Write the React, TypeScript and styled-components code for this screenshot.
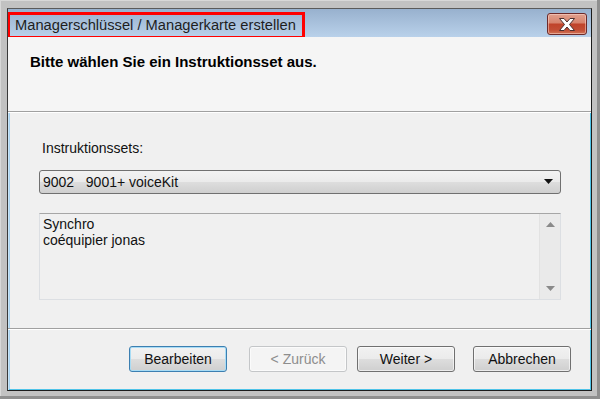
import React from 'react'
import styled, { createGlobalStyle } from 'styled-components'

const GlobalStyle = createGlobalStyle`
  html, body {
    margin: 0;
    padding: 0;
    background: #c0c0c0;
  }
`

const Frame = styled.div`
  width: 600px;
  height: 399px;
  box-sizing: border-box;
  padding: 8px 8px 8px 7px;
  background: #c2c2c2;
  box-shadow: inset -3px -3px 0 #8f8f8f, inset 1px 1px 0 #d8d8d8;
  font-family: "Liberation Sans", Arial, sans-serif;
`

const Window = styled.div`
  height: 100%;
  box-sizing: border-box;
  border: 1px solid #1c1c1c;
  border-top-color: #5a5a5a;
  border-left-color: #3a3a3a;
  box-shadow: inset 1px 0 0 #c8e4f6, inset -1px -1px 0 #4fc3e8, inset 2px 0 0 #a9d2ef;
  display: flex;
  flex-direction: column;
  background: #f0f0f0;
  overflow: hidden;
`

const TitleBar = styled.div`
  height: 28px;
  flex: none;
  display: flex;
  align-items: center;
  justify-content: space-between;
  padding: 0 4px 0 0;
  background: linear-gradient(#98b1ce, #b9d1ea);
`

const TitleText = styled.span`
  margin-left: -1px;
  margin-top: 4px;
  height: 27px;
  box-sizing: border-box;
  padding: 0 6px 0 5px;
  border: 3px solid #ff0000;
  font-size: 14.7px;
  line-height: 20px;
  color: #1e1e1e;
  white-space: nowrap;
`

const CloseButton = styled.div`
  width: 40px;
  height: 22px;
  box-sizing: border-box;
  margin-top: 2px;
  border: 1px solid #6c2a2a;
  border-radius: 3px;
  background: linear-gradient(#e0a08e 0%, #d7836d 45%, #c0432a 50%, #c24e35 80%, #d17558 100%);
  box-shadow: inset 0 0 0 1px rgba(255, 220, 210, 0.5);
  display: flex;
  align-items: center;
  justify-content: center;
`

const Header = styled.div`
  height: 74px;
  flex: none;
  background: #f5f5f5;
  border-bottom: 1px solid #a0a0a0;
  box-shadow: 0 1px 0 #ffffff;
  padding-left: 22px;
  display: flex;
  align-items: flex-start;
`

const Heading = styled.div`
  margin-top: 16px;
  font-size: 15px;
  font-weight: bold;
  color: #000;
`

const Body = styled.div`
  flex: 1;
  padding: 28px 30px 0 31px;
  border-bottom: 1px solid #a0a0a0;
  box-shadow: 0 1px 0 #ffffff;
  display: flex;
  flex-direction: column;
`

const Label = styled.div`
  font-size: 14px;
  color: #111;
  margin-left: 3px;
  height: 16px;
  line-height: 16px;
`

const Combo = styled.div`
  margin-top: 14px;
  height: 24px;
  box-sizing: border-box;
  border: 1px solid #707070;
  border-radius: 3px;
  background: linear-gradient(#f2f2f2 0%, #ebebeb 48%, #dddddd 52%, #cfcfcf 100%);
  display: flex;
  align-items: center;
  justify-content: space-between;
  padding: 0 7px 0 3px;
  font-size: 14px;
  color: #111;
`

const ComboText = styled.span`
  white-space: pre;
`

const ListBox = styled.div`
  margin-top: 19px;
  height: 87px;
  box-sizing: border-box;
  border: 1px solid #dcdfe3;
  border-top-color: #a6a6a6;
  display: flex;
  background: #f0f0f0;
`

const ListText = styled.div`
  flex: 1;
  padding: 2px 3px;
  font-size: 14px;
  line-height: 16px;
  color: #111;
`

const ScrollBar = styled.div`
  width: 20px;
  flex: none;
  background: #eaeaea;
  border-left: 1px solid #e2e2e2;
  display: flex;
  flex-direction: column;
  justify-content: space-between;
  align-items: center;
  padding: 8px 0 8px;
`

const Footer = styled.div`
  height: 61px;
  box-sizing: border-box;
  flex: none;
  display: flex;
  align-items: flex-start;
  padding: 17px 0 0 121px;
`

const Button = styled.div<{ $focused?: boolean; $disabled?: boolean; $gap?: number }>`
  width: 98px;
  height: 26px;
  box-sizing: border-box;
  margin-left: ${(p) => p.$gap ?? 0}px;
  border: 1px solid ${(p) => (p.$focused ? '#3c7fb1' : p.$disabled ? '#c4c6c8' : '#707070')};
  border-radius: 3px;
  background: ${(p) =>
    p.$disabled
      ? '#f4f4f4'
      : 'linear-gradient(#f2f2f2 0%, #ebebeb 48%, #dddddd 52%, #cfcfcf 100%)'};
  box-shadow: ${(p) => (p.$focused ? 'inset 0 0 0 1px #a8dcf5' : 'inset 0 0 0 1px rgba(255,255,255,0.6)')};
  display: flex;
  align-items: center;
  justify-content: center;
  font-size: 14px;
  color: ${(p) => (p.$disabled ? '#8d8d8d' : '#111')};
`

const CloseIcon = () => (
  <svg width="20" height="15" viewBox="0 0 20 15">
    <path
      d="M2.5 1.5 L7 1.5 L10 5 L13 1.5 L17.5 1.5 L12.5 7.5 L17.5 13.5 L13 13.5 L10 10 L7 13.5 L2.5 13.5 L7.5 7.5 Z"
      fill="#ffffff"
      stroke="#4a3030"
      strokeWidth="1"
      strokeLinejoin="round"
    />
  </svg>
)

const DropArrow = () => (
  <svg width="9" height="6" viewBox="0 0 9 6">
    <path d="M0 0 H9 L4.5 5 Z" fill="#111" />
  </svg>
)

const ScrollArrow = ({ up }: { up?: boolean }) => (
  <svg width="9" height="5" viewBox="0 0 9 5">
    <path d={up ? 'M0 5 H9 L4.5 0 Z' : 'M0 0 H9 L4.5 5 Z'} fill="#8a8a8a" />
  </svg>
)

const App = () => (
  <>
    <GlobalStyle />
    <Frame>
      <Window>
        <TitleBar>
          <TitleText>Managerschlüssel / Managerkarte erstellen</TitleText>
          <CloseButton>
            <CloseIcon />
          </CloseButton>
        </TitleBar>
        <Header>
          <Heading>Bitte wählen Sie ein Instruktionsset aus.</Heading>
        </Header>
        <Body>
          <Label>Instruktionssets:</Label>
          <Combo>
            <ComboText>{'9002   9001+ voiceKit'}</ComboText>
            <DropArrow />
          </Combo>
          <ListBox>
            <ListText>
              Synchro
              <br />
              coéquipier jonas
            </ListText>
            <ScrollBar>
              <ScrollArrow up />
              <ScrollArrow />
            </ScrollBar>
          </ListBox>
        </Body>
        <Footer>
          <Button $focused>Bearbeiten</Button>
          <Button $disabled $gap={22}>&lt; Zurück</Button>
          <Button $gap={10}>Weiter &gt;</Button>
          <Button $gap={18}>Abbrechen</Button>
        </Footer>
      </Window>
    </Frame>
  </>
)

export default App
